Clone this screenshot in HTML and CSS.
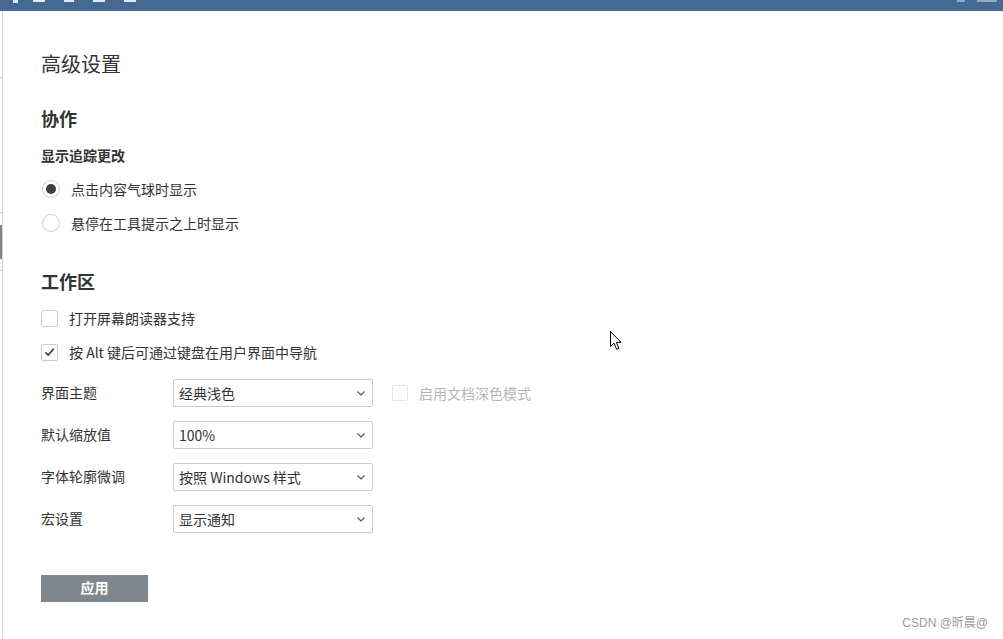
FILE: index.html
```html
<!DOCTYPE html>
<html lang="zh-CN">
<head>
<meta charset="utf-8">
<title>高级设置</title>
<link rel="stylesheet" href="styles.css">
</head>
<body>
<div class="topbar">
  <div class="menu">
    <span class="bit w4"></span>
    <span class="bit w12 g1"></span>
    <span class="bit w10 g2"></span>
    <span class="bit w12 g2"></span>
    <span class="bit w12 g2"></span>
  </div>
  <div class="menu-right">
    <span class="bit dim w8"></span>
    <span class="bit dim w20 g3"></span>
  </div>
</div>
<div class="layout">
  <div class="sidebar">
    <div class="side-line l1"></div>
    <div class="side-line l2"></div>
    <div class="side-block"></div>
    <div class="side-line l3"></div>
  </div>
  <main class="content">
    <h1 class="title">高级设置</h1>

    <h2 class="section">协作</h2>
    <div class="sub">显示追踪更改</div>
    <div class="opt"><span class="radio checked"></span><span>点击内容气球时显示</span></div>
    <div class="opt"><span class="radio"></span><span>悬停在工具提示之上时显示</span></div>

    <h2 class="section ws">工作区</h2>
    <div class="opt cb"><span class="check"></span><span>打开屏幕朗读器支持</span></div>
    <div class="opt cb"><span class="check on"><svg viewBox="0 0 16 16" width="16" height="16"><path d="M3.5 8.3 L6.6 11.2 L12.6 4.6" fill="none" stroke="#3a3a3a" stroke-width="1.7"/></svg></span><span>按 Alt 键后可通过键盘在用户界面中导航</span></div>

    <div class="form">
      <div class="row">
        <span class="label">界面主题</span>
        <div class="select"><span>经典浅色</span><svg class="chev" viewBox="0 0 8 5" width="8" height="5"><path d="M0.5 0.5 L4 4 L7.5 0.5" fill="none" stroke="#555" stroke-width="1.2"/></svg></div>
        <div class="extra"><span class="check disabled"></span><span class="dis-label">启用文档深色模式</span></div>
      </div>
      <div class="row">
        <span class="label">默认缩放值</span>
        <div class="select"><span>100%</span><svg class="chev" viewBox="0 0 8 5" width="8" height="5"><path d="M0.5 0.5 L4 4 L7.5 0.5" fill="none" stroke="#555" stroke-width="1.2"/></svg></div>
      </div>
      <div class="row">
        <span class="label">字体轮廓微调</span>
        <div class="select"><span>按照 Windows 样式</span><svg class="chev" viewBox="0 0 8 5" width="8" height="5"><path d="M0.5 0.5 L4 4 L7.5 0.5" fill="none" stroke="#555" stroke-width="1.2"/></svg></div>
      </div>
      <div class="row">
        <span class="label">宏设置</span>
        <div class="select"><span>显示通知</span><svg class="chev" viewBox="0 0 8 5" width="8" height="5"><path d="M0.5 0.5 L4 4 L7.5 0.5" fill="none" stroke="#555" stroke-width="1.2"/></svg></div>
      </div>
    </div>

    <button class="apply">应用</button>
  </main>
</div>
<div class="watermark">CSDN @昕晨@</div>
<svg class="cursor" viewBox="0 0 12 20" width="12" height="20"><path d="M0.5 0.5 L0.5 15.5 L4 12.2 L6.6 18.3 L8.9 17.3 L6.4 11.4 L11 11.4 Z" fill="#fff" stroke="#000" stroke-width="1" stroke-linejoin="miter"/></svg>
</body>
</html>
```

FILE: styles.css
```css
* { box-sizing: border-box; }
html, body { margin: 0; padding: 0; }
body {
  width: 1003px;
  height: 639px;
  overflow: hidden;
  background: #fff;
  font-family: "Noto Sans CJK SC", "Noto Sans", sans-serif;
  color: #333;
  position: relative;
}
.topbar {
  height: 11px;
  background: #446992;
  display: flex;
  justify-content: space-between;
  align-items: flex-start;
}
.menu, .menu-right {
  display: flex;
  align-items: flex-start;
}
.menu { padding-left: 13px; }
.menu-right { padding-right: 6px; }
.bit {
  display: block;
  height: 2px;
  background: #ffffff;
  opacity: 0.85;
}
.bit.dim { background: #a3b6cd; }
.w4 { width: 5px; height: 3px; }
.w8 { width: 8px; }
.w10 { width: 10px; }
.w12 { width: 12px; }
.w20 { width: 20px; }
.g1 { margin-left: 15px; }
.g2 { margin-left: 19px; }
.g3 { margin-left: 12px; }

.layout {
  display: flex;
  height: 628px;
}
.sidebar {
  width: 3px;
  border-right: 1px solid #d4d4d4;
  position: relative;
  flex: none;
}
.side-line {
  position: absolute;
  left: 0;
  width: 2px;
  height: 1px;
  background: #d4d4d4;
}
.l1 { top: 66px; }
.l2 { top: 201px; }
.l3 { top: 259px; }
.side-block {
  position: absolute;
  left: 0;
  top: 214px;
  width: 2px;
  height: 34px;
  background: #7d868f;
}

.content {
  padding: 39px 0 0 38px;
  flex: 1;
}
.title {
  margin: 0;
  font-size: 20px;
  font-weight: normal;
  line-height: 28px;
  color: #333;
}
.section {
  margin: 27px 0 0;
  font-size: 18px;
  font-weight: bold;
  line-height: 26px;
  color: #333;
}
.section.ws { margin-top: 28px; }
.sub {
  margin-top: 14px;
  font-size: 14px;
  font-weight: bold;
  line-height: 20px;
}
.opt {
  display: flex;
  align-items: center;
  height: 34px;
  font-size: 14px;
  gap: 11px;
}
.sub + .opt { margin-top: 7px; }
.section + .opt { margin-top: 7px; }
.opt.cb { gap: 11px; }
.radio {
  width: 18px; height: 18px;
  border: 1px solid #cfcfcf;
  border-radius: 50%;
  margin-left: 1px;
  display: flex;
  align-items: center;
  justify-content: center;
  flex: none;
}
.radio.checked::after {
  content: "";
  width: 10px; height: 10px;
  border-radius: 50%;
  background: #3d3d3d;
}
.check {
  width: 17px; height: 17px;
  border: 1px solid #cccccc;
  border-radius: 2px;
  display: flex;
  align-items: center;
  justify-content: center;
  flex: none;
}
.check svg { display: block; }
.check.disabled { border-color: #e4e4e4; width: 16px; height: 16px; }

.form {
  margin-top: 10px;
  display: flex;
  flex-direction: column;
  gap: 14px;
}
.row {
  display: flex;
  align-items: center;
  height: 28px;
  font-size: 14px;
}
.label {
  width: 132px;
  flex: none;
  margin-top: -3px;
}
.select {
  width: 200px;
  height: 28px;
  border: 1px solid #cccccc;
  border-radius: 2px;
  display: flex;
  align-items: center;
  justify-content: space-between;
  padding: 0 7px 0 5px;
  font-size: 14px;
  color: #333;
  flex: none;
}
.chev { display: block; }
.extra {
  display: flex;
  align-items: center;
  gap: 11px;
  margin-left: 19px;
}
.dis-label { color: #b5b5b5; }

.apply {
  margin-top: 42px;
  width: 107px;
  height: 27px;
  border: none;
  border-radius: 0;
  background: #7f868e;
  color: #fff;
  font-family: "Noto Sans CJK SC", sans-serif;
  font-size: 14px;
  font-weight: bold;
  line-height: 24px;
  padding: 0 0 3px;
  display: block;
}

.watermark {
  position: absolute;
  right: 15px;
  top: 613px;
  font-family: "Liberation Sans", "Noto Sans CJK SC", sans-serif;
  font-size: 12px;
  color: #9a9a9a;
}
.cursor {
  position: absolute;
  left: 610px;
  top: 331px;
}
```
